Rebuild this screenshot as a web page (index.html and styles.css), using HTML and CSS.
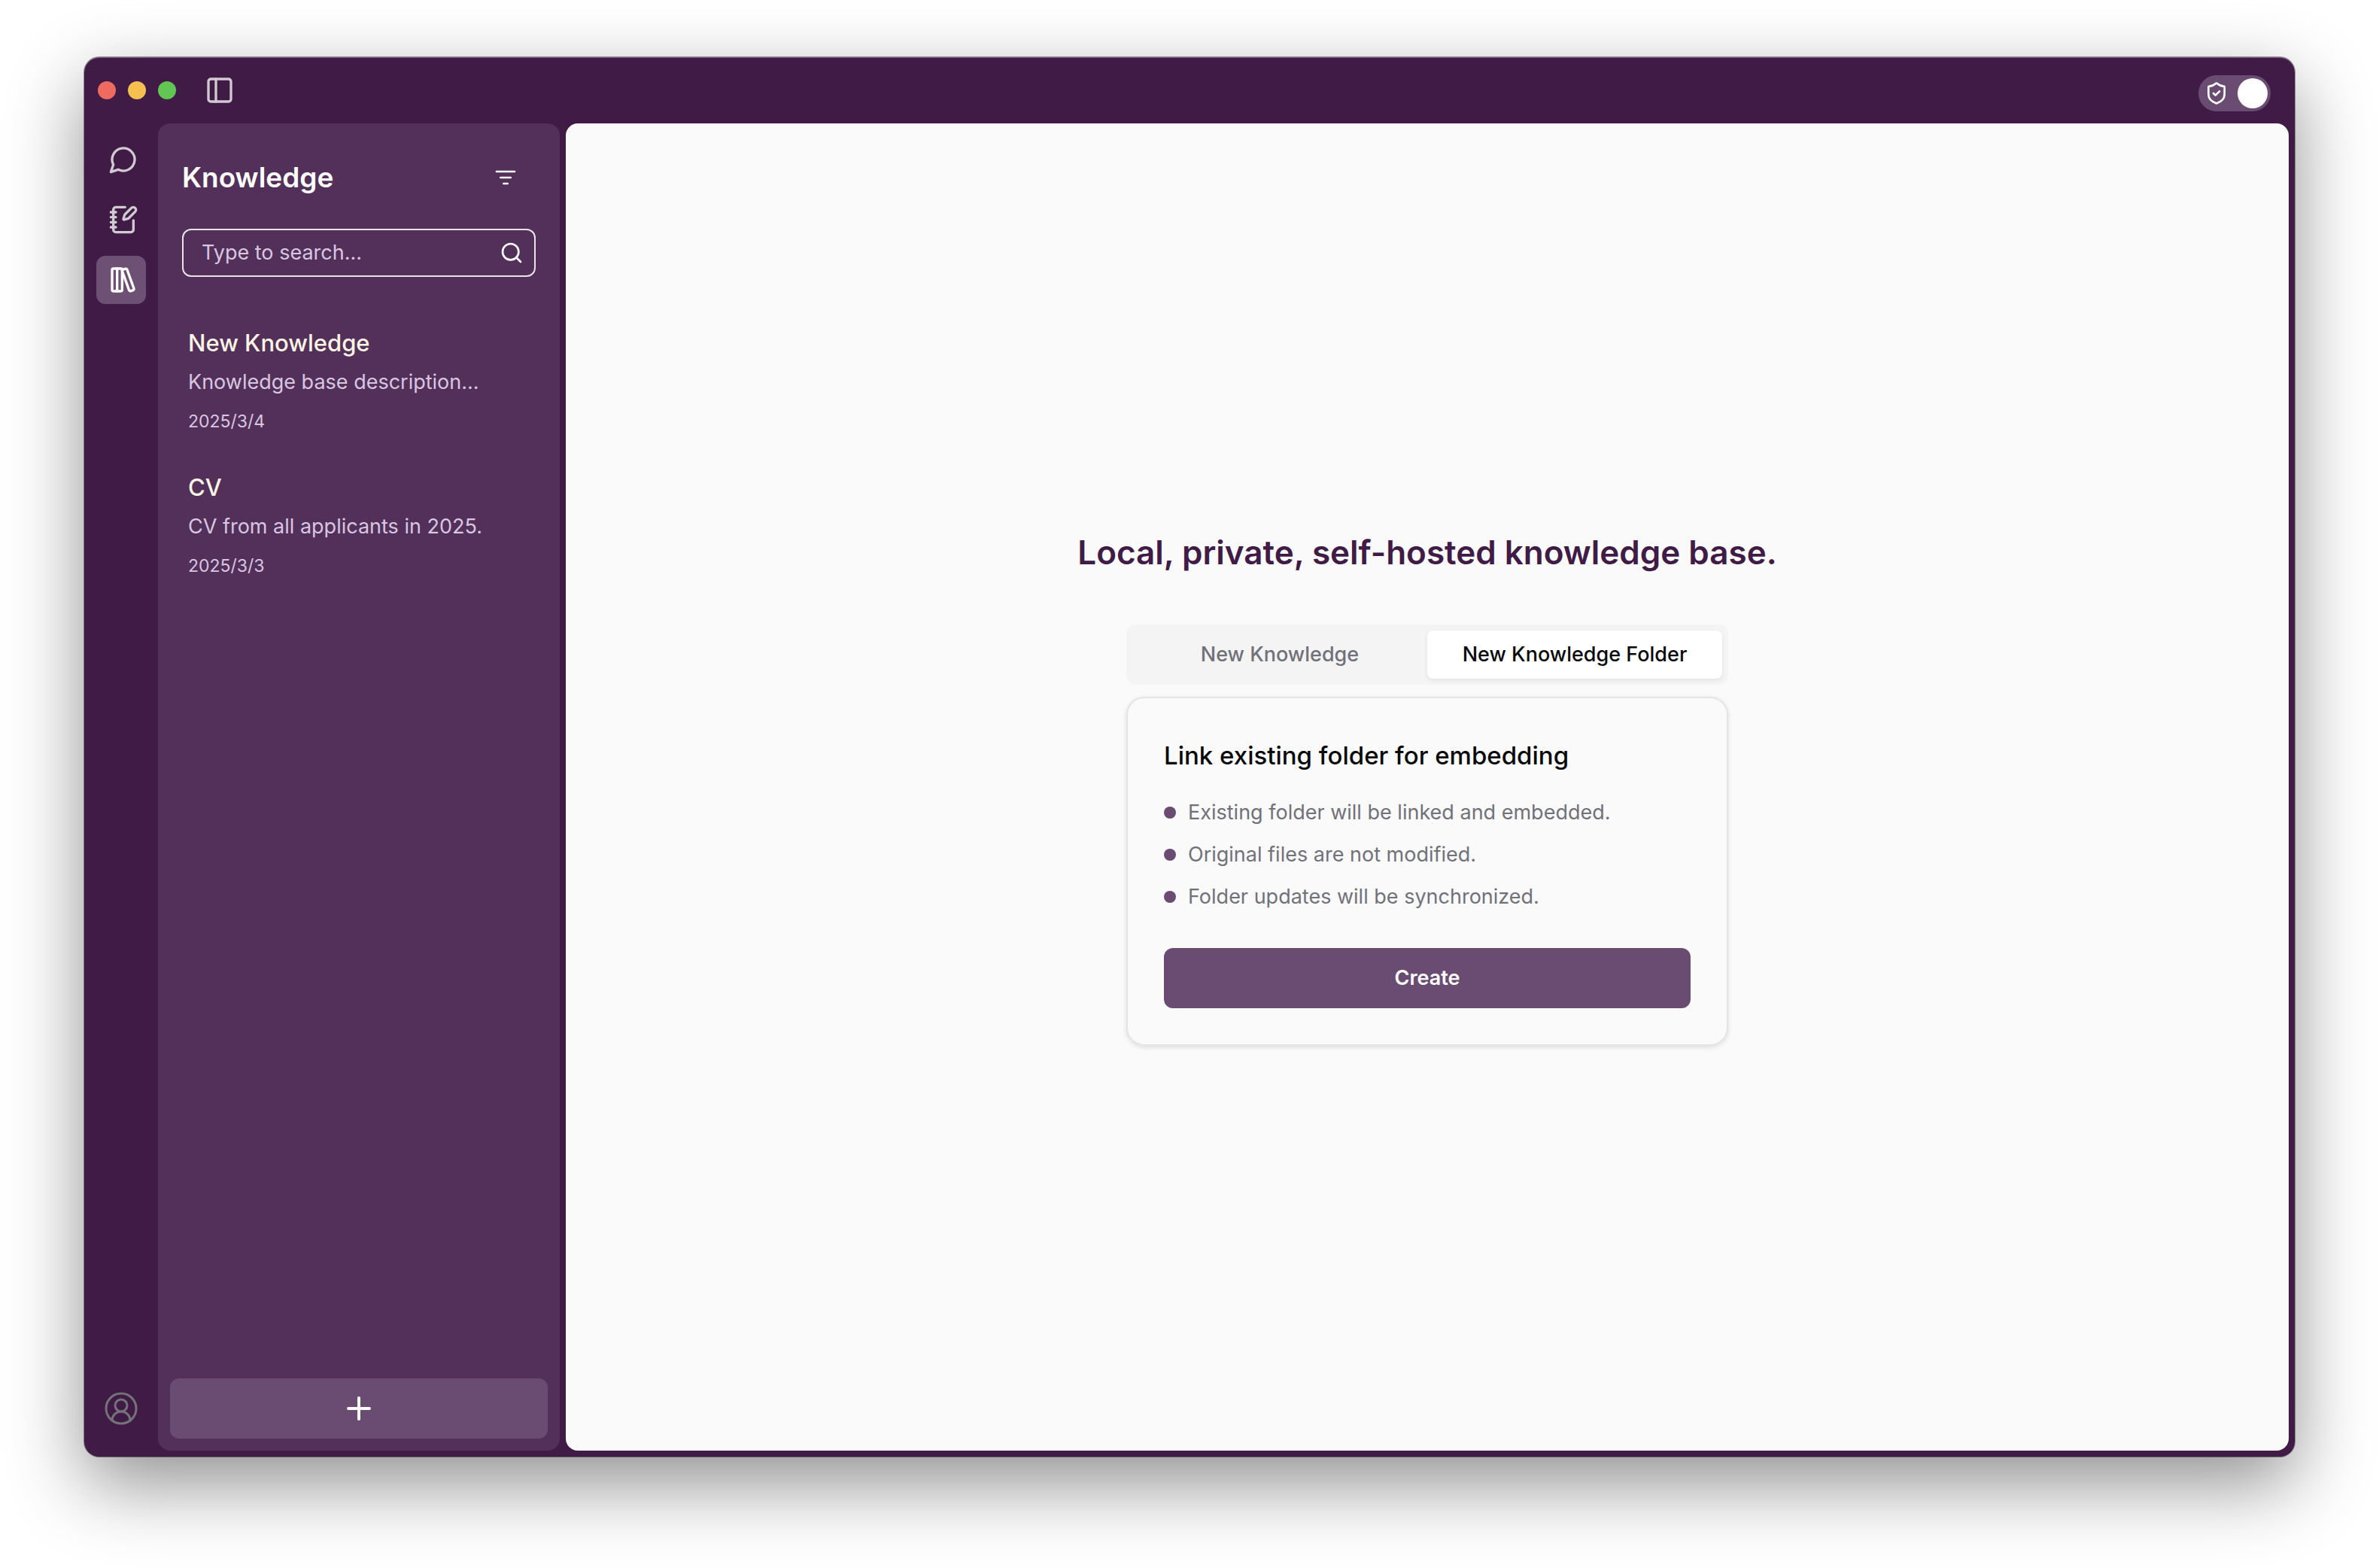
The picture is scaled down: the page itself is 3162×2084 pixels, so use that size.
FILE: index.html
```html
<!DOCTYPE html>
<html lang="en">
<head>
  <meta charset="utf-8">
  <meta name="viewport" content="width=device-width, initial-scale=1">
  <title>Knowledge</title>
  <link rel="stylesheet" href="styles.css">
</head>
<body>
  <div class="window">
    <header class="titlebar">
      <div class="lights">
        <span class="light light-close"></span>
        <span class="light light-minimize"></span>
        <span class="light light-zoom"></span>
      </div>
      <button class="icon-button" type="button" aria-label="Toggle sidebar">
        <svg class="icon icon-md" viewBox="0 0 24 24"><rect x="3" y="3" width="18" height="18" rx="2"/><path d="M9 3v18"/></svg>
      </button>
      <label class="switch">
        <svg class="icon icon-sm" viewBox="0 0 24 24"><path d="M20 13c0 5-3.5 7.500-7.660 8.950a1 1 0 0 1-.67-.01C7.500 20.500 4 18 4 13V6a1 1 0 0 1 1-1c2 0 4.500-1.200 6.240-2.720a1.170 1.170 0 0 1 1.520 0C14.510 3.810 17 5 19 5a1 1 0 0 1 1 1z"/><path d="m9 12 2 2 4-4"/></svg>
        <input class="switch-thumb" type="checkbox" role="switch" aria-label="Private mode" checked>
      </label>
    </header>

    <div class="workspace">
      <nav class="rail" aria-label="Main">
        <a class="rail-link" href="#chat" aria-label="Chat">
          <svg class="icon icon-md" viewBox="0 0 24 24"><path d="M7.900 20A9 9 0 1 0 4 16.100L2 22Z"/></svg>
        </a>
        <a class="rail-link" href="#notes" aria-label="Notes">
          <svg class="icon icon-md" viewBox="0 0 24 24"><path d="M13.400 2H6a2 2 0 0 0-2 2v16a2 2 0 0 0 2 2h12a2 2 0 0 0 2-2v-7.400"/><path d="M2 6h4M2 10h4M2 14h4M2 18h4"/><path d="M21.378 5.626a1 1 0 1 0-3.004-3.004l-5.010 5.012a2 2 0 0 0-.506.854l-.837 2.870a.5.5 0 0 0 .62.62l2.870-.837a2 2 0 0 0 .854-.506z"/></svg>
        </a>
        <a class="rail-link rail-link-active" href="#knowledge" aria-label="Knowledge" aria-current="page">
          <svg class="icon icon-md" viewBox="0 0 24 24"><rect x="3" y="3" width="8" height="18" rx="1"/><path d="M7 3v18"/><path d="M20.400 18.900c.2.5-.1 1.100-.6 1.300l-1.900.7c-.5.2-1.100-.1-1.300-.6L11.100 5.100c-.2-.5.1-1.100.6-1.300l1.900-.7c.5-.2 1.100.1 1.300.6Z"/></svg>
        </a>
        <a class="rail-user" href="#account" aria-label="Account">
          <svg class="icon icon-lg icon-thin" viewBox="0 0 24 24"><path d="M18 20a6 6 0 0 0-12 0"/><circle cx="12" cy="10" r="4"/><circle cx="12" cy="12" r="10"/></svg>
        </a>
      </nav>

      <aside class="panel">
        <div class="panel-header">
          <h1 class="panel-title">Knowledge</h1>
          <button class="filter-button" type="button" aria-label="Filter">
            <svg class="icon icon-sm" viewBox="0 0 24 24"><path d="M3 6h18M7 12h10M10 18h4"/></svg>
          </button>
        </div>
        <label class="search">
          <input class="search-input" type="text" placeholder="Type to search..." aria-label="Search">
          <svg class="icon icon-sm" viewBox="0 0 24 24"><circle cx="11" cy="11" r="8"/><path d="m21 21-4.300-4.300"/></svg>
        </label>
        <ul class="items">
          <li>
            <a class="item" href="#new-knowledge">
              <span class="item-title">New Knowledge</span>
              <span class="item-text">Knowledge base description...</span>
              <time class="item-date" datetime="2025-03-04">2025/3/4</time>
            </a>
          </li>
          <li>
            <a class="item" href="#cv">
              <span class="item-title">CV</span>
              <span class="item-text">CV from all applicants in 2025.</span>
              <time class="item-date" datetime="2025-03-03">2025/3/3</time>
            </a>
          </li>
        </ul>
        <button class="add-button" type="button" aria-label="Add knowledge">
          <svg class="icon icon-lg" viewBox="0 0 24 24"><path d="M5 12h14M12 5v14"/></svg>
        </button>
      </aside>

      <main class="main">
        <h2 class="headline">Local, private, self-hosted knowledge base.</h2>
        <div class="create">
          <div class="tabs" role="tablist">
            <button class="tab" type="button" role="tab" aria-selected="false">New Knowledge</button>
            <button class="tab tab-active" type="button" role="tab" aria-selected="true">New Knowledge Folder</button>
          </div>
          <section class="card" role="tabpanel">
            <h3 class="card-title">Link existing folder for embedding</h3>
            <ul class="points">
              <li class="point">Existing folder will be linked and embedded.</li>
              <li class="point">Original files are not modified.</li>
              <li class="point">Folder updates will be synchronized.</li>
            </ul>
            <button class="create-button" type="button">Create</button>
          </section>
        </div>
      </main>
    </div>
  </div>
</body>
</html>
```

FILE: styles.css
```css
:root {
  --aubergine: #3f1b46;
  --panel: #523059;
  --accent: #6a4c72;
  --surface: #fafafa;
  --lilac: #d9c6e0;
  --muted: #71717a;
}

* {
  box-sizing: border-box;
}

body {
  margin: 0;
  min-height: 100vh;
  display: flex;
  padding: 76px 112px 148px;
  background: #ffffff;
  font-family: Inter, "Liberation Sans", sans-serif;
  font-size: 27px;
  line-height: 40px;
}

h1, h2, h3, ul {
  margin: 0;
  padding: 0;
}

ul {
  list-style: none;
}

a {
  color: inherit;
  text-decoration: none;
}

button {
  padding: 0;
  border: 0;
  background: none;
  color: inherit;
  font: inherit;
}

.icon {
  display: block;
  flex: none;
  fill: none;
  stroke: currentColor;
  stroke-width: 2;
  stroke-linecap: round;
  stroke-linejoin: round;
}

.icon-sm { width: 32px; height: 32px; }
.icon-md { width: 40px; height: 40px; }
.icon-lg { width: 48px; height: 48px; }
.icon-thin { stroke-width: 1.5; }

.window {
  flex: 1;
  display: flex;
  flex-direction: column;
  border-radius: 20px;
  background: var(--aubergine);
  box-shadow:
    inset 0 1px 0 rgba(255, 255, 255, 0.3),
    0 0 0 1px rgba(0, 0, 0, 0.4),
    0 36px 100px rgba(0, 0, 0, 0.44);
}

.titlebar {
  display: flex;
  align-items: flex-start;
  height: 88px;
  padding: 24px 32px 0 18px;
  color: #cfcbd0;
}

.lights {
  display: flex;
  align-items: center;
  gap: 16px;
  height: 40px;
  margin-right: 38px;
}

.light {
  width: 24px;
  height: 24px;
  border-radius: 50%;
}

.light-close { background: #ed6c5f; }
.light-minimize { background: #f5c04f; }
.light-zoom { background: #61c654; }

.switch {
  display: flex;
  align-items: center;
  justify-content: space-between;
  width: 96px;
  height: 48px;
  margin-left: auto;
  padding: 0 4px 0 8px;
  border-radius: 24px;
  background: var(--accent);
  color: #ffffff;
}

.switch-thumb {
  appearance: none;
  width: 40px;
  height: 40px;
  margin: 0;
  border-radius: 50%;
  background: #ffffff;
}

.workspace {
  flex: 1;
  display: flex;
  padding: 0 8px 8px 0;
}

.rail {
  flex: none;
  display: flex;
  flex-direction: column;
  gap: 16px;
  width: 98px;
  padding: 16px 16px 32px;
  color: #cfcbd0;
}

.rail-link {
  display: flex;
  align-items: center;
  height: 64px;
  padding-left: 16px;
  border-radius: 12px;
}

.rail-link-active {
  background: #6e5075;
  color: #ffffff;
}

.rail-user {
  display: flex;
  justify-content: center;
  margin-top: auto;
  color: #75737a;
}

.panel {
  flex: none;
  display: flex;
  flex-direction: column;
  width: 534px;
  margin-right: 8px;
  padding: 32px 16px 16px;
  border-radius: 16px;
  background: var(--panel);
  color: #ffffff;
}

.panel-header {
  display: flex;
  align-items: center;
  justify-content: space-between;
  height: 80px;
  margin: 0 16px 28px;
}

.panel-title {
  font-size: 37px;
  font-weight: 600;
}

.filter-button {
  padding: 24px;
}

.search {
  display: flex;
  align-items: center;
  height: 64px;
  margin: 0 16px 44px;
  padding: 0 14px 0 24px;
  border: 2px solid #e9e4ea;
  border-radius: 12px;
}

.search-input {
  flex: 1;
  min-width: 0;
  padding: 0;
  border: 0;
  outline: 0;
  background: none;
  color: #ffffff;
  font: inherit;
}

.search-input::placeholder {
  color: var(--lilac);
  opacity: 1;
}

.item {
  display: flex;
  flex-direction: column;
  gap: 12px;
  margin: 0 16px;
  padding: 24px 8px;
  color: var(--lilac);
}

.item-title {
  color: #fdf4e3;
  font-size: 31px;
  font-weight: 500;
}

.item-date {
  font-size: 23px;
}

.add-button {
  display: flex;
  align-items: center;
  justify-content: center;
  height: 80px;
  margin-top: auto;
  border-radius: 12px;
  background: var(--accent);
}

.main {
  flex: 1;
  display: flex;
  flex-direction: column;
  align-items: center;
  justify-content: center;
  gap: 64px;
  border-radius: 16px;
  background: var(--surface);
}

.headline {
  color: var(--aubergine);
  font-size: 44px;
  font-weight: 600;
  line-height: 64px;
}

.create {
  display: flex;
  flex-direction: column;
  gap: 16px;
  width: 800px;
  max-width: 100%;
}

.tabs {
  display: grid;
  grid-template-columns: 1fr 1fr;
  padding: 8px;
  border-radius: 12px;
  background: #f4f4f5;
}

.tab {
  height: 64px;
  border-radius: 8px;
  color: var(--muted);
  font-weight: 500;
}

.tab-active {
  background: #ffffff;
  box-shadow: 0 2px 6px rgba(0, 0, 0, 0.08);
  color: #09090b;
}

.card {
  display: flex;
  flex-direction: column;
  padding: 48px;
  border: 2px solid #e4e4e7;
  border-radius: 24px;
  box-shadow: 0 2px 6px rgba(0, 0, 0, 0.12);
}

.card-title {
  margin-bottom: 28px;
  color: #09090b;
  font-size: 33px;
  font-weight: 500;
  line-height: 56px;
}

.points {
  display: flex;
  flex-direction: column;
  gap: 16px;
  margin-bottom: 48px;
  color: var(--muted);
}

.point {
  display: flex;
  align-items: center;
  gap: 16px;
}

.point::before {
  content: "";
  width: 16px;
  height: 16px;
  border-radius: 50%;
  background: var(--accent);
}

.create-button {
  height: 80px;
  border-radius: 12px;
  background: var(--accent);
  color: #ffffff;
  font-weight: 600;
}
```
